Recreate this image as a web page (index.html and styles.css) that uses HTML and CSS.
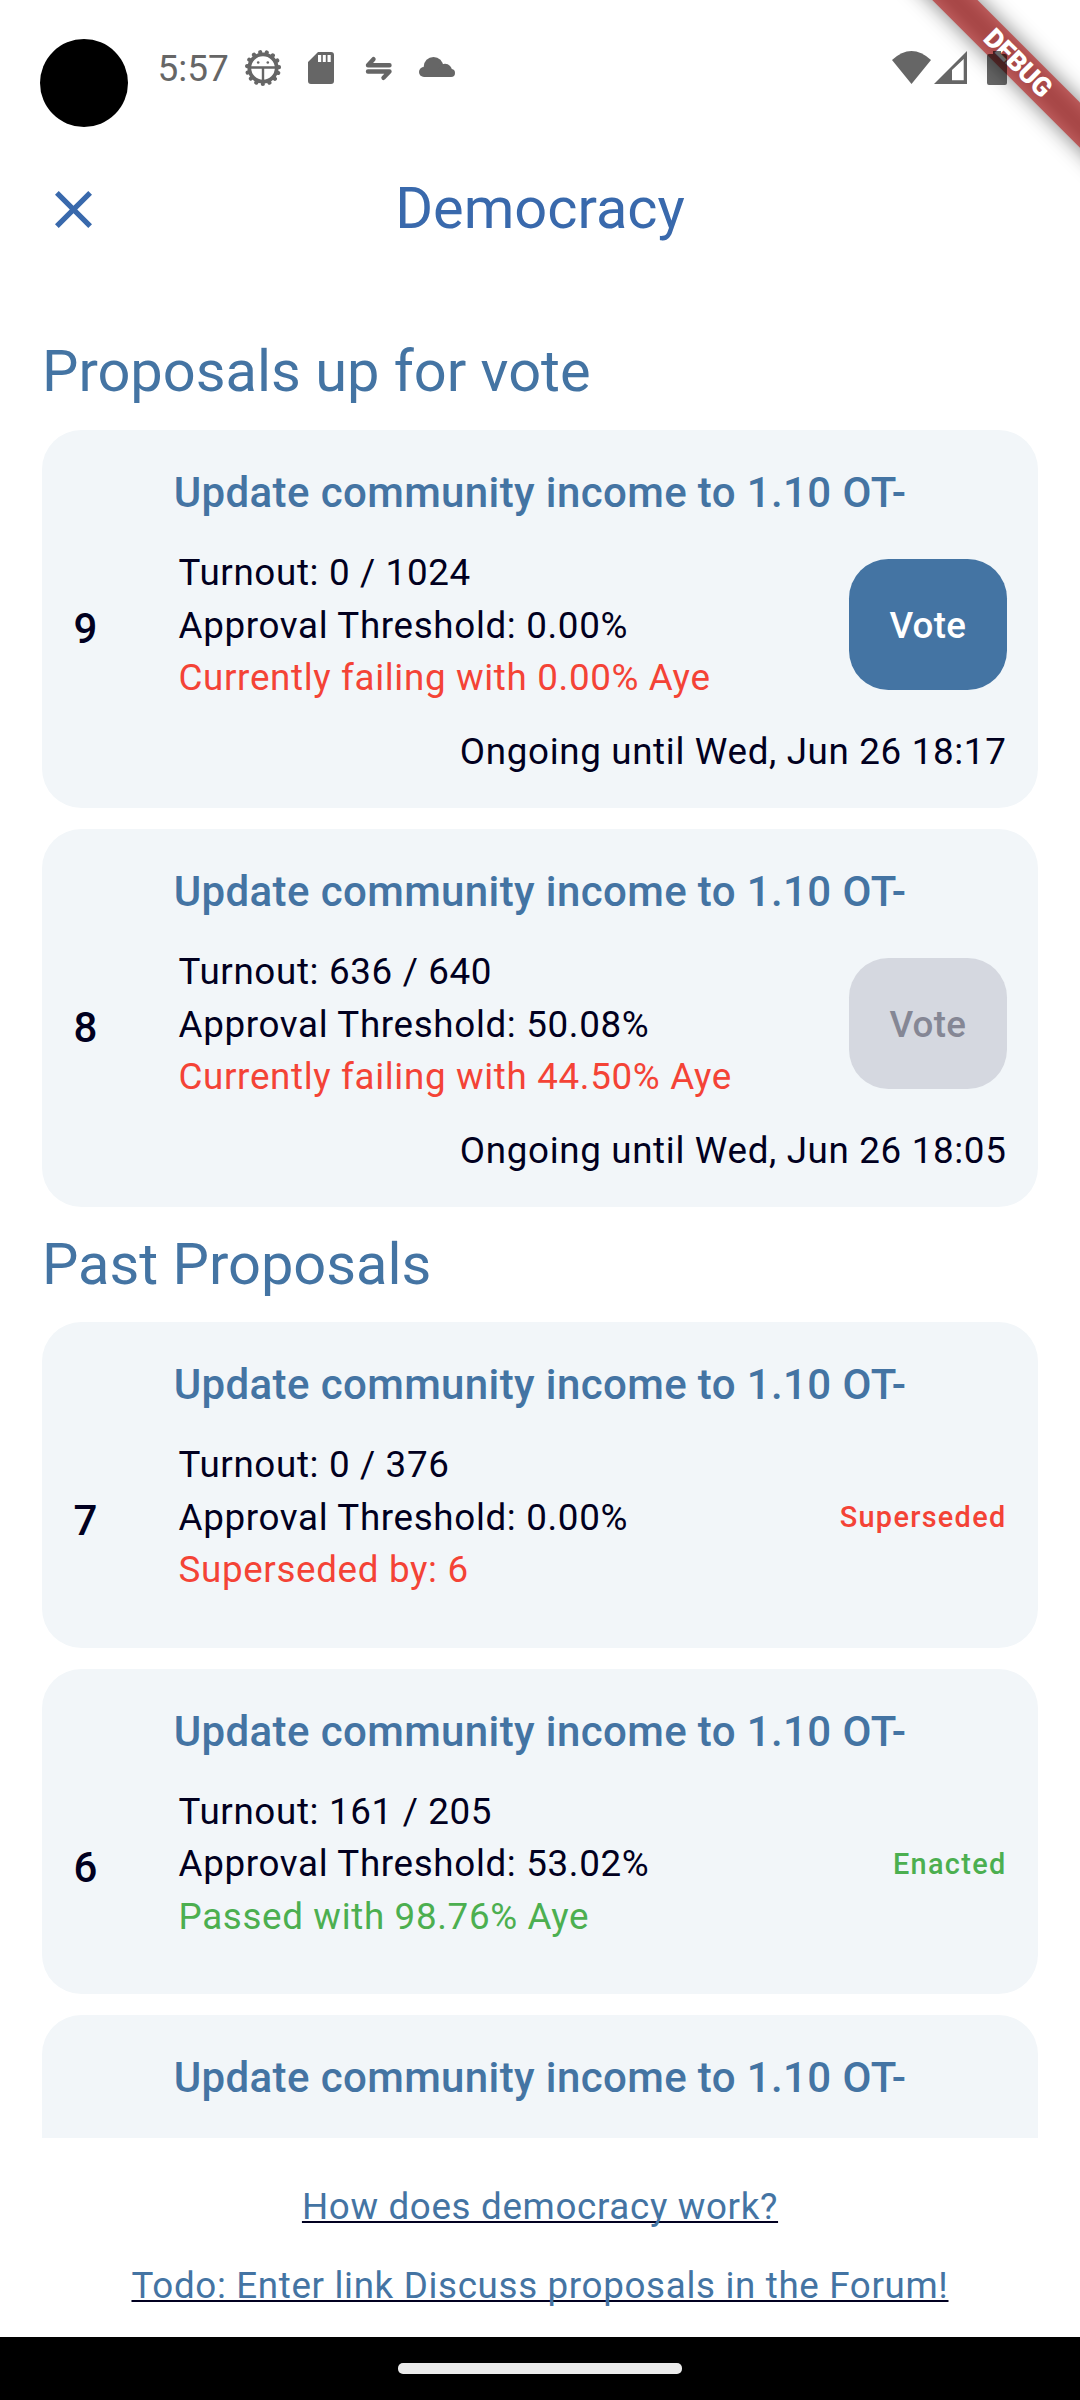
FILE: index.html
```
<!DOCTYPE html>
<html lang="en">
<head>
<meta charset="utf-8">
<title>Democracy</title>
<link rel="stylesheet" href="styles.css">
</head>
<body>
<div class="screen">
  <header class="status">
    <span class="camera"></span>
    <span class="clock">5:57</span>
    <svg class="ic-gear" viewBox="0 0 38 38" width="38" height="38" fill="none" stroke="#666">
      <circle cx="19" cy="19" r="13.700" stroke-width="3.800"/>
      <circle cx="19" cy="19" r="16" stroke-width="4.200" stroke-linecap="round" stroke-dasharray="0.010 6.692" stroke-dashoffset="-5.030"/>
      <path d="M6 18.500H32M19 18V32" stroke-width="2.400"/>
      <circle cx="14.200" cy="13.500" r="1.300" fill="#666" stroke="none"/>
      <circle cx="23.800" cy="13.500" r="1.300" fill="#666" stroke="none"/>
    </svg>
    <svg class="ic-sd" viewBox="0 0 26 32" width="26" height="32"><path fill="#666" fill-rule="evenodd" d="M10 0H23Q26 0 26 3V29Q26 32 23 32H3Q0 32 0 29V10ZM10 3V10H13.200V3ZM14.800 3V10H17.800V3ZM19.500 3V10H22.700V3Z"/></svg>
    <svg class="ic-swap" viewBox="0 0 28 26" width="28" height="26" fill="none" stroke="#666" stroke-width="4.400" stroke-linecap="round" stroke-linejoin="round"><path d="M24.500 9.300H3L8.500 3.200M3 15.500H24.500L18.500 21.800"/></svg>
    <svg class="ic-cloud" viewBox="0 0 36 20" width="36" height="20" fill="#666"><circle cx="5" cy="15" r="5"/><circle cx="14.500" cy="9.800" r="9.800"/><circle cx="26" cy="14" r="7.200"/><circle cx="32" cy="16" r="4"/><path d="M5 12H32V20H5Z"/></svg>
    <span class="spacer"></span>
    <svg class="ic-wifi" viewBox="0 0 39 33" width="39" height="33"><path fill="#666" d="M0 9Q19.500-9 39 9L19.500 33Z"/></svg>
    <svg class="ic-cell" viewBox="0 0 33 33" width="33" height="33"><path fill="#666" fill-rule="evenodd" d="M33 0V33H0ZM29.700 8L18 19V29.300H29.700Z"/></svg>
    <svg class="ic-batt" viewBox="0 0 20 34" width="20" height="34"><path fill="#000" fill-opacity=".6" d="M6 0H14V3H18Q20 3 20 5V32Q20 34 18 34H2Q0 34 0 32V5Q0 3 2 3H6Z"/></svg>
  </header>
  <nav class="appbar">
    <svg class="close" viewBox="5 5 14 14" width="37" height="37"><path fill="#3969ac" d="M19 6.410L17.590 5 12 10.590 6.410 5 5 6.410 10.590 12 5 17.590 6.410 19 12 13.410 17.590 19 19 17.590 13.410 12z"/></svg>
    <h1 class="page-title">Democracy</h1>
  </nav>
  <main class="list">
    <h2 class="section">Proposals up for vote</h2>
    <article class="card active">
      <h3 class="card-title">Update community income to 1.10 OT-</h3>
      <div class="row">
        <span class="num">9</span>
        <div class="info"><p>Turnout: 0 / 1024</p><p>Approval Threshold: 0.00%</p><p class="red">Currently failing with 0.00% Aye</p></div>
        <button class="vote">Vote</button>
      </div>
      <p class="until">Ongoing until Wed, Jun 26 18:17</p>
    </article>
    <article class="card active">
      <h3 class="card-title">Update community income to 1.10 OT-</h3>
      <div class="row">
        <span class="num">8</span>
        <div class="info"><p>Turnout: 636 / 640</p><p>Approval Threshold: 50.08%</p><p class="red">Currently failing with 44.50% Aye</p></div>
        <button class="vote off" disabled>Vote</button>
      </div>
      <p class="until">Ongoing until Wed, Jun 26 18:05</p>
    </article>
    <h2 class="section past">Past Proposals</h2>
    <article class="card">
      <h3 class="card-title">Update community income to 1.10 OT-</h3>
      <div class="row">
        <span class="num">7</span>
        <div class="info"><p>Turnout: 0 / 376</p><p>Approval Threshold: 0.00%</p><p class="red">Superseded by: 6</p></div>
        <span class="state red">Superseded</span>
      </div>
    </article>
    <article class="card">
      <h3 class="card-title">Update community income to 1.10 OT-</h3>
      <div class="row">
        <span class="num">6</span>
        <div class="info"><p>Turnout: 161 / 205</p><p>Approval Threshold: 53.02%</p><p class="green">Passed with 98.76% Aye</p></div>
        <span class="state green">Enacted</span>
      </div>
    </article>
    <article class="card">
      <h3 class="card-title">Update community income to 1.10 OT-</h3>
    </article>
  </main>
  <footer class="links">
    <a class="link">How does democracy work?</a>
    <a class="link">Todo: Enter link Discuss proposals in the Forum!</a>
  </footer>
  <div class="navbar"><span class="pill"></span></div>
  <div class="banner"><span>DEBUG</span></div>
</div>
</body>
</html>
```
FILE: styles.css
```
* { box-sizing: border-box; margin: 0; padding: 0; }
body { font-family: Roboto, sans-serif; background: #fff; color: #010020; }
.screen { position: relative; width: 1080px; height: 2400px; overflow: hidden; display: flex; flex-direction: column; }

.status { position: relative; z-index: 2; flex: none; height: 136px; display: flex; align-items: flex-start; padding: 39px 73px 0 40px; }
.camera { width: 88px; height: 88px; border-radius: 50%; background: #000; }
.clock { margin: 8px 0 0 29.500px; width: 86.500px; font-size: 37px; line-height: 44px; color: #666; }
.spacer { flex: 1; }
.ic-gear { margin-top: 10px; }
.ic-sd { margin: 13px 0 0 26px; }
.ic-swap { margin: 17px 0 0 31px; }
.ic-cloud { margin: 18px 0 0 26px; }
.ic-wifi { margin-top: 12px; }
.ic-cell { margin: 12px 0 0 3px; }
.ic-batt { margin: 12px 0 0 20px; }

.appbar { flex: none; height: 147px; display: grid; grid-template-columns: 1fr auto 1fr; align-items: center; padding: 0 54.500px; }
.page-title { margin-top: -3px; font-size: 57.750px; font-weight: 400; line-height: 74px; color: #3969ac; }
.close { display: block; }

.list { flex: none; height: 1855px; padding: 50px 42px 0; overflow: hidden; }
.section { height: 97px; font-size: 57.750px; font-weight: 400; line-height: 76px; color: #4474a3; }
.section.past { margin-top: -2.700px; line-height: 78px; }
.card { height: 325.500px; border-radius: 39.400px; background: #f2f6f9; padding: 36px 31.500px 0; margin-bottom: 21px; }
.card.active { height: 378px; }
.card-title { font-size: 42px; font-weight: 500; line-height: 54px; letter-spacing: .380px; text-align: center; color: #4474a3; white-space: nowrap; }
.row { display: flex; align-items: center; height: 157.500px; margin-top: 27px; }
.num { width: 105px; font-size: 42px; font-weight: 500; line-height: 52px; padding-top: 6px; }
.info { flex: 1; font-size: 36.750px; line-height: 52.500px; letter-spacing: .660px; white-space: nowrap; }
.vote { width: 157.500px; height: 131.250px; margin-top: -2px; padding-top: 2px; border: 0; border-radius: 39.400px; background: #4474a3; color: #fff; font: 500 36.750px Roboto, sans-serif; letter-spacing: .260px; }
.vote.off { background: #d5d8e0; color: #858795; }
.state { margin-top: -2px; font-size: 28.875px; font-weight: 500; letter-spacing: 1.310px; }
.until { font-size: 36.750px; line-height: 52.500px; letter-spacing: .660px; text-align: right; margin-top: 21px; }
.red { color: #f44336; }
.green { color: #4caf50; }

.links { flex: none; height: 199px; display: flex; flex-direction: column; align-items: center; padding-top: 43px; gap: 26px; }
.link { font-size: 36.750px; line-height: 52.500px; letter-spacing: .660px; color: #4474a3; text-decoration: underline #010020 2px; text-underline-offset: 2px; text-decoration-skip-ink: none; white-space: nowrap; }
.navbar { flex: none; height: 63px; background: #000; display: flex; justify-content: center; padding-top: 26px; }
.pill { width: 284px; height: 11px; border-radius: 5px; background: #ebebeb; }

/* Corner ribbon: soft shadow layer under a translucent red strip */
.banner { position: absolute; z-index: 1; left: 867.500px; top: 47.250px; width: 300px; height: 31.500px; transform: rotate(45deg); display: flex; align-items: center; justify-content: center; }
.banner::before { content: ""; position: absolute; inset: 0; background: rgba(0, 0, 0, .5); filter: blur(10.400px); }
.banner::after { content: ""; position: absolute; inset: 0; background: rgba(183, 28, 28, .627); }
.banner span { position: relative; z-index: 1; margin-top: 2px; font-size: 26.775px; font-weight: 900; letter-spacing: -.400px; color: #fff; line-height: 31px; }
```
